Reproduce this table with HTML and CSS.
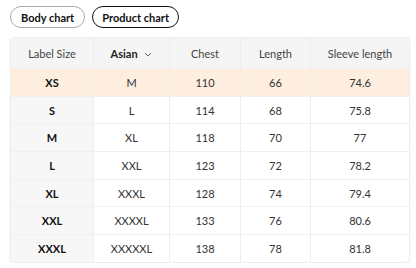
FILE: index.html
```html
<!DOCTYPE html>
<html lang="en">
<head>
    <meta charset="UTF-8">
    <title>Size chart</title>
    <link rel="stylesheet" href="styles.css">
</head>
<body>
    <div class="tabs">
        <button class="tab">Body chart</button>
        <button class="tab active">Product chart</button>
    </div>

    <div class="chart">
        <table>
            <thead>
                <tr>
                    <th class="c1">Label Size</th>
                    <th class="c2"><span class="pick">Asian</span>
                        <svg class="chev" width="8" height="5" viewBox="0 0 8 5"><path d="M1 1l3 3 3-3" fill="none" stroke="#666" stroke-width="1"/></svg>
                    </th>
                    <th class="c3">Chest</th>
                    <th class="c4">Length</th>
                    <th>Sleeve length</th>
                </tr>
            </thead>
            <tbody>
                <tr class="picked"><td>XS</td><td>M</td><td>110</td><td>66</td><td>74.6</td></tr>
                <tr><td>S</td><td>L</td><td>114</td><td>68</td><td>75.8</td></tr>
                <tr><td>M</td><td>XL</td><td>118</td><td>70</td><td>77</td></tr>
                <tr><td>L</td><td>XXL</td><td>123</td><td>72</td><td>78.2</td></tr>
                <tr><td>XL</td><td>XXXL</td><td>128</td><td>74</td><td>79.4</td></tr>
                <tr><td>XXL</td><td>XXXXL</td><td>133</td><td>76</td><td>80.6</td></tr>
                <tr><td>XXXL</td><td>XXXXXL</td><td>138</td><td>78</td><td>81.8</td></tr>
            </tbody>
        </table>
    </div>
</body>
</html>
```

FILE: styles.css
```css
body {
    font-family: Lato, "Noto Sans", sans-serif;
    background-color: #ffffff;
    color: #333;
    margin: 0;
    padding: 6px 8px 0 10px;
}
.tabs {
    display: flex;
    gap: 7px;
    margin-bottom: 9px;
}
.tab {
    font-family: Lato, "Noto Sans", sans-serif;
    font-size: 11px;
    font-weight: bold;
    color: #111;
    background: #fff;
    border: 1px solid #aaa;
    border-radius: 11px;
    height: 22px;
    padding: 0 10px;
    cursor: pointer;
}
.tab.active {
    border: 1.5px solid #111;
    padding: 0 9px;
}
.chart {
    width: 398px;
    border: 1px solid #ececec;
    border-radius: 4px;
    overflow: hidden;
    box-shadow: 0 1px 2px rgba(0, 0, 0, 0.06);
}
table {
    width: 100%;
    border-collapse: collapse;
    table-layout: fixed;
    font-size: 11px;
}
th, td {
    text-align: center;
    border-left: 1px solid #eeeeee;
    border-top: 1px solid #f0f0f0;
    padding: 0;
}
th:first-child, td:first-child {
    border-left: none;
}
th {
    height: 30px;
    background-color: #f5f5f5;
    font-weight: normal;
    color: #444;
    border-top: none;
}
th .pick {
    color: #222;
    font-weight: bold;
}
td {
    height: 26.7px;
    color: #333;
}
td:first-child {
    background-color: #f7f7f7;
    font-weight: bold;
    color: #111;
}
tr.picked td {
    background-color: #fdeee0;
}
.c1 { width: 82px; }
.c2 { width: 75px; }
.c3 { width: 70px; }
.c4 { width: 69px; }
.chev {
    margin-left: 4px;
    vertical-align: middle;
}
```
